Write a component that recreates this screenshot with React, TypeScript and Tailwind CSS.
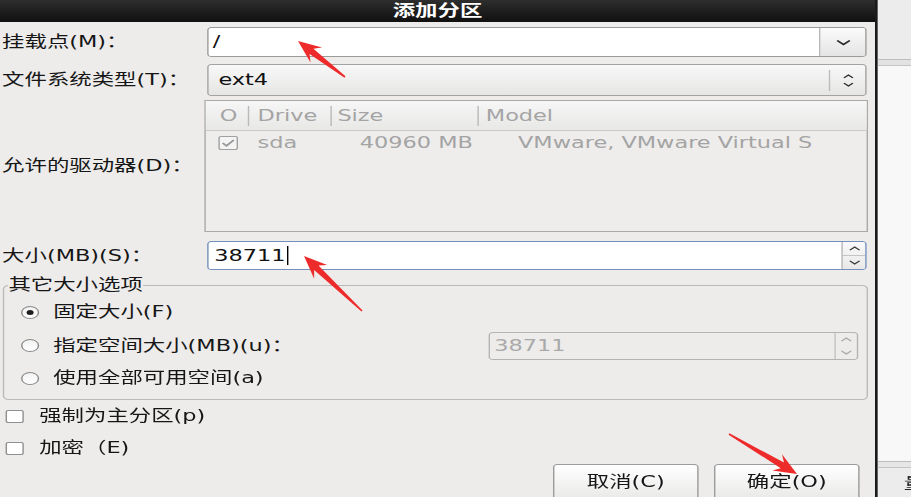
import React from "react";

// the screenshot is stretched sideways, so the dialog is laid out at
// 651px wide and scaled by 1.4 on the x axis

const font = "font-['DejaVu_Sans','Noto_Sans_CJK_SC',sans-serif]";

function Chevron({ dir, className }: { dir: "up" | "down"; className?: string }) {
    return (
        <svg width="11" height="7" viewBox="0 0 11 7" className={className}>
            {dir === "down" ? (
                <path d="M1 1.5 L5.5 5.5 L10 1.5" fill="none" stroke="#2a2a2a" strokeWidth="1.6" />
            ) : (
                <path d="M1 5.5 L5.5 1.5 L10 5.5" fill="none" stroke="#2a2a2a" strokeWidth="1.6" />
            )}
        </svg>
    );
}

function SmallArrow({ dir, muted }: { dir: "up" | "down"; muted?: boolean }) {
    const c = muted ? "#a9a9a9" : "#3a3a3a";
    return (
        <svg width="9" height="5" viewBox="0 0 9 5">
            {dir === "up" ? (
                <path d="M1 4.2 L4.5 1 L8 4.2" fill="none" stroke={c} strokeWidth="1.1" />
            ) : (
                <path d="M1 0.8 L4.5 4 L8 0.8" fill="none" stroke={c} strokeWidth="1.1" />
            )}
        </svg>
    );
}

function Radio({ checked }: { checked?: boolean }) {
    return (
        <div className="w-[13px] h-[13px] rounded-full border border-[#8a8a8a] bg-gradient-to-b from-[#f2f2f2] to-white flex items-center justify-center shrink-0">
            {checked && <div className="w-[5px] h-[5px] rounded-full bg-[#1e1e1e]" />}
        </div>
    );
}

function Check() {
    return <div className="w-[13px] h-[13px] rounded-[2px] border border-[#8f8f8f] bg-white shrink-0" />;
}

function Arrow({ tail, tip }: { tail: [number, number]; tip: [number, number] }) {
    const dx = tip[0] - tail[0];
    const dy = tip[1] - tail[1];
    const len = Math.hypot(dx, dy);
    const ux = dx / len;
    const uy = dy / len;
    const nx = -uy;
    const ny = ux;
    const at = (d: number, w: number) => `${tail[0] + ux * d + nx * w},${tail[1] + uy * d + ny * w}`;
    const neck = len - 17;
    const barb = len - 23;
    const pts = [at(0, 0.8), at(neck, 3.2), at(barb, 9.5), `${tip[0]},${tip[1]}`, at(barb, -9.5), at(neck, -3.2), at(0, -0.8)];
    return <polygon points={pts.join(" ")} fill="#ee2b2b" />;
}

function Row({ label, children, className }: { label: string; children: React.ReactNode; className?: string }) {
    return (
        <div className={`flex items-center shrink-0 ${className ?? ""}`}>
            <div className="w-[148px] shrink-0 pl-[1.5px] text-[16px] text-[#161616] whitespace-nowrap">{label}</div>
            {children}
        </div>
    );
}

export default function App() {
    return (
        <div className={`relative w-[911px] h-[497px] overflow-hidden bg-[#ededec] ${font}`}>
            <div className="w-[651px] h-[497px] flex origin-top-left scale-x-[1.4]">
                {/* dialog */}
                <div className="w-[625px] shrink-0 h-full bg-[#edeceb] flex flex-col">
                    <div className="h-[22px] shrink-0 bg-gradient-to-b from-[#2e2e2e] to-[#101010] flex items-center justify-center text-white font-bold text-[16px] leading-none">
                        添加分区
                    </div>

                    <Row label="挂载点(M)：" className="mt-[5px]">
                        <div className="w-[471px] h-[30px] flex rounded-[3px] border border-[#9b9b9b] bg-white overflow-hidden">
                            <div className="flex-1 flex items-center pl-[3px] text-[16px] text-[#111]">/</div>
                            <div className="w-[33px] border-l border-[#b8b8b8] bg-gradient-to-b from-[#fbfbfb] to-[#e4e4e4] flex items-center justify-center">
                                <Chevron dir="down" />
                            </div>
                        </div>
                    </Row>

                    <Row label="文件系统类型(T)：" className="mt-[7px]">
                        <div className="w-[471px] h-[32px] flex items-center rounded-[3px] border border-[#a3a3a3] bg-gradient-to-b from-[#f8f8f8] to-[#e6e6e5]">
                            <div className="flex-1 pl-[7px] text-[16px] text-[#111]">ext4</div>
                            <div className="w-px h-[21px] bg-[#bcbcbc]" />
                            <div className="w-[25px] flex flex-col items-center gap-[3px]">
                                <Chevron dir="up" className="w-[8px] h-[5px]" />
                                <Chevron dir="down" className="w-[8px] h-[5px]" />
                            </div>
                        </div>
                    </Row>

                    <Row label="允许的驱动器(D)：" className="mt-[4px]">
                        <div className="w-[474px] -ml-[2px] h-[132px] border border-[#a9a9a9] bg-[#eeedec] text-[16px] text-[#a4a4a4] flex flex-col">
                            <div className="h-[30px] flex items-center border-b border-[#c9c9c9] bg-gradient-to-b from-[#f6f6f6] to-[#e8e8e7]">
                                <div className="w-[30px] pl-[10px]">O</div>
                                <div className="w-px h-[20px] bg-[#b9b9b9]" />
                                <div className="w-[58px] pl-[6px]">Drive</div>
                                <div className="w-px h-[20px] bg-[#b9b9b9]" />
                                <div className="w-[104px] pl-[4px]">Size</div>
                                <div className="w-px h-[20px] bg-[#b9b9b9]" />
                                <div className="flex-1 pl-[5px]">Model</div>
                            </div>
                            <div className="h-[24px] flex items-center">
                                <div className="w-[37px] pl-[9px]">
                                    <div className="w-[14px] h-[14px] rounded-[2px] border border-[#a0a0a0] bg-[#f4f4f4] flex items-center justify-center">
                                        <svg width="10" height="8" viewBox="0 0 10 8">
                                            <path d="M1 4 L3.8 6.8 L9 1" fill="none" stroke="#9a9a9a" strokeWidth="1.6" />
                                        </svg>
                                    </div>
                                </div>
                                <div className="w-[73px]">sda</div>
                                <div className="w-[113px]">40960 MB</div>
                                <div className="flex-1 whitespace-nowrap">VMware, VMware Virtual S</div>
                            </div>
                        </div>
                    </Row>

                    <Row label="大小(MB)(S)：" className="mt-[9px]">
                        <div className="w-[471px] h-[29px] flex rounded-[3px] border border-[#7390bb] bg-white overflow-hidden">
                            <div className="flex-1 flex items-center pl-[4px] text-[16px] text-[#111]">
                                38711<span className="w-px h-[19px] bg-black ml-px" />
                            </div>
                            <div className="w-[17px] border-l border-[#b5b5b5] flex flex-col bg-gradient-to-b from-[#fafafa] to-[#e8e8e8]">
                                <div className="flex-1 flex items-center justify-center border-b border-[#c4c4c4]"><SmallArrow dir="up" /></div>
                                <div className="flex-1 flex items-center justify-center"><SmallArrow dir="down" /></div>
                            </div>
                        </div>
                    </Row>

                    <fieldset className="shrink-0 mt-[6px] ml-[2px] w-[618px] h-[124px] rounded-[4px] border border-[#bababa] text-[16px] text-[#161616]">
                        <legend className="ml-[3px] leading-[18px]">其它大小选项</legend>
                        <div className="h-[32px] mt-[2px] flex items-center pl-[12px] gap-[10px]">
                            <Radio checked />
                            <span>固定大小(F)</span>
                        </div>
                        <div className="h-[35px] flex items-center pl-[12px] gap-[10px]">
                            <Radio />
                            <span className="flex-1">指定空间大小(MB)(u)：</span>
                            <div className="w-[264px] h-[28px] mr-[6px] flex rounded-[3px] border border-[#b4b4b4] bg-[#edecea] overflow-hidden">
                                <div className="flex-1 flex items-center pl-[3px] text-[#a9a9a9]">38711</div>
                                <div className="w-[16px] border-l border-[#c2c2c2] flex flex-col">
                                    <div className="flex-1 flex items-center justify-center"><SmallArrow dir="up" muted /></div>
                                    <div className="flex-1 flex items-center justify-center"><SmallArrow dir="down" muted /></div>
                                </div>
                            </div>
                        </div>
                        <div className="h-[30px] flex items-center pl-[12px] gap-[10px]">
                            <Radio />
                            <span>使用全部可用空间(a)</span>
                        </div>
                    </fieldset>

                    <div className="shrink-0 text-[16px] text-[#161616]">
                        <div className="h-[32px] flex items-center pl-[4px] gap-[11px]">
                            <Check />
                            <span>强制为主分区(p)</span>
                        </div>
                        <div className="h-[32px] flex items-center pl-[4px] gap-[11px]">
                            <Check />
                            <span>加密（E)</span>
                        </div>
                    </div>

                    <div className="shrink-0 flex justify-end gap-[11px] pr-[11px]">
                        <button className="w-[104px] h-[36px] rounded-[3px] border border-[#9c9c9c] bg-gradient-to-b from-white to-[#e9e9e8] text-[16px] text-[#161616]">
                            取消(C)
                        </button>
                        <button className="w-[104px] h-[36px] rounded-[3px] border border-[#9c9c9c] bg-gradient-to-b from-white to-[#e9e9e8] text-[16px] text-[#161616]">
                            确定(O)
                        </button>
                    </div>
                </div>

                <div className="w-[1.5px] shrink-0 h-full bg-[#1a1a1a]" />

                {/* window behind the dialog */}
                <div className="flex-1 min-w-0 h-full flex flex-col">
                    <div className="h-[60px] shrink-0 bg-[#ececec] border-b border-[#bdbdbd]" />
                    <div className="h-[6px] shrink-0 bg-[#e2e2e2] border-b border-[#c4c4c4]" />
                    <div className="flex-1 bg-[#f8f8f8] border-b border-[#bdbdbd]" />
                    <div className="h-[6px] shrink-0 bg-[#e6e6e6] border-b border-[#c4c4c4]" />
                    <div className="h-[29px] shrink-0 bg-[#ececec] pl-[19px] pt-[4px] text-[16px] text-[#222] overflow-hidden whitespace-nowrap">量</div>
                </div>
            </div>

            <svg className="absolute inset-0 pointer-events-none" width="911" height="497">
                <Arrow tail={[345, 77]} tip={[298, 41]} />
                <Arrow tail={[362, 311]} tip={[304, 256]} />
                <Arrow tail={[729, 434]} tip={[797, 474]} />
            </svg>
        </div>
    );
}
